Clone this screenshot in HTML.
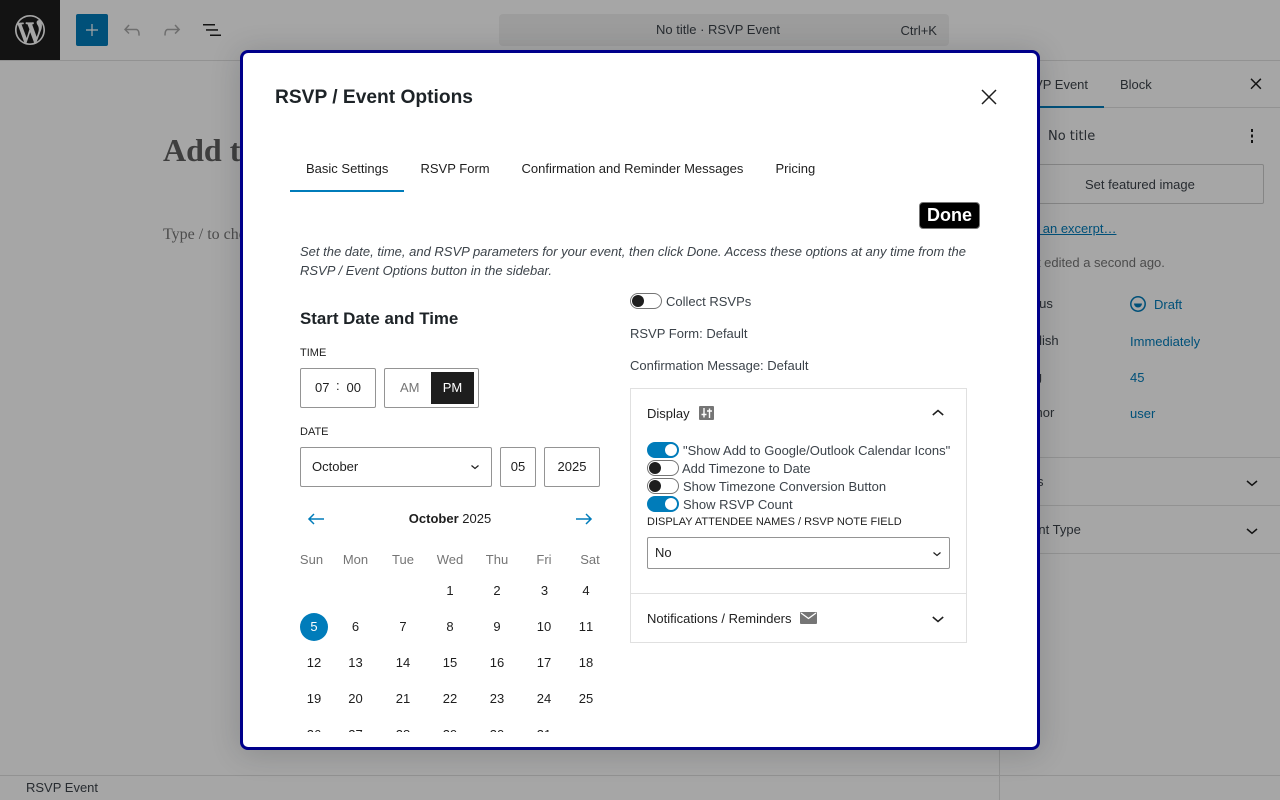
<!DOCTYPE html>
<html><head><meta charset="utf-8"><title>RSVP Event</title>
<style>
html,body{margin:0;padding:0;width:1280px;height:800px;overflow:hidden;background:#fff}
body{font:13px/18px "Liberation Sans",sans-serif;color:#3c434a;position:relative}
.a{position:absolute;white-space:nowrap}
.l{position:absolute;background:#e0e0e0}
.bx{position:absolute;box-sizing:border-box;border:1px solid #949494;border-radius:2px;background:#fff}
.blue{color:#007cba}
.dk{color:#1e1e1e}
.tg{position:absolute;box-sizing:border-box;width:32px;height:16px;border-radius:8px;border:1px solid #757575;background:#fff}
.tg:before{content:"";position:absolute;left:1px;top:1px;width:12px;height:12px;border-radius:50%;background:#1e1e1e}
.tg.on{background:#007cba;border-color:#007cba}
.tg.on:before{left:17px;background:#fff}
.d{position:absolute;width:40px;margin-left:-20px;text-align:center;line-height:18px;color:#1e1e1e;font-kerning:none}
.h{position:absolute;width:50px;margin-left:-25px;text-align:center;line-height:18px;color:#757575}
#ov{position:absolute;left:0;top:0;width:1280px;height:800px;background:rgba(0,0,0,.35)}
#m{position:absolute;left:240px;top:50px;width:800px;height:700px;box-sizing:border-box;border:3px solid #00008b;border-radius:8px;background:#fff;box-shadow:0 3px 30px rgba(25,30,35,.2);overflow:hidden}
#in{position:absolute;left:-243px;top:-53px;width:1280px;height:800px;will-change:transform}
#cal{position:absolute;left:0;top:0;width:1280px;height:732px;overflow:hidden}
</style></head><body>

<div class="l" style="left:0;top:60px;width:1280px;height:1px"></div>
<div class="a" style="left:0;top:0;width:60px;height:60px;background:#1e1e1e"></div>
<svg class="a" style="left:15px;top:15px" width="30" height="30" viewBox="0 0 20 20" fill="#fff"><path d="M20 10c0-5.51-4.49-10-10-10C4.48 0 0 4.49 0 10c0 5.52 4.48 10 10 10 5.51 0 10-4.48 10-10zM7.78 15.37L4.37 6.22c.55-.02 1.17-.08 1.17-.08.5-.06.44-1.13-.06-1.11 0 0-1.45.11-2.37.11-.18 0-.37 0-.58-.01C4.12 2.69 6.87 1.11 10 1.11c2.33 0 4.45.87 6.05 2.34-.68-.11-1.65.39-1.65 1.58 0 .74.45 1.36.9 2.1.35.61.55 1.36.55 2.46 0 1.49-1.4 5-1.4 5l-3.03-8.37c.54-.02.82-.17.82-.17.5-.05.44-1.25-.06-1.22 0 0-1.44.12-2.38.12-.87 0-2.33-.12-2.33-.12-.5-.03-.56 1.2-.06 1.22l.92.08 1.26 3.41zM17.41 10c.24-.64.74-1.87.43-4.25.7 1.29 1.05 2.71 1.05 4.25 0 3.29-1.73 6.24-4.4 7.78.97-2.59 1.94-5.2 2.92-7.78zM6.1 18.09C3.12 16.65 1.11 13.53 1.11 10c0-1.3.23-2.48.72-3.59C3.25 10.3 4.67 14.2 6.1 18.09zm4.03-6.63l2.58 6.98c-.86.29-1.76.45-2.71.45-.79 0-1.57-.11-2.29-.33.81-2.38 1.62-4.74 2.42-7.1z"/></svg>
<div class="a" style="left:76px;top:14px;width:32px;height:32px;background:#007cba;border-radius:2px"></div>
<svg class="a" style="left:80px;top:18px" width="24" height="24" viewBox="0 0 24 24" fill="#fff"><path d="M18 11.4h-5.400V6h-1.200v5.400H6v1.200h5.400V18h1.200v-5.400H18z"/></svg>
<svg class="a" style="left:120px;top:18px" width="24" height="24" viewBox="0 0 24 24" fill="#aaa"><path d="M18.3 11.7c-.6-.6-1.4-.9-2.3-.9H6.7l2.9-3.3-1.1-1-4.500 5L8.500 16l1-1-2.700-2.700H16c.5 0 .9.2 1.300.5 1 1 1 3.400 1 4.500v.3h1.500v-.2c0-1.500 0-4.300-1.500-5.700z"/></svg>
<svg class="a" style="left:160px;top:18px" width="24" height="24" viewBox="0 0 24 24" fill="#aaa"><path d="M15.600 6.500l-1.100 1 2.900 3.300H8c-.9 0-1.700.3-2.300.9-1.400 1.500-1.400 4.200-1.400 5.600v.2h1.500v-.3c0-1.100 0-3.500 1-4.500.3-.3.7-.5 1.300-.5h9.200L14.500 15l1.100 1.100 4.600-4.600-4.600-5z"/></svg>
<svg class="a" style="left:200px;top:18px" width="24" height="24" viewBox="0 0 24 24" fill="#1e1e1e"><rect x="3" y="6" width="12" height="1.500"/><rect x="6" y="11.200" width="12" height="1.500"/><rect x="10" y="16.500" width="11" height="1.500"/></svg>

<div class="a" style="left:499px;top:14px;width:450px;height:32px;background:#f0f0f0;border-radius:4px"></div>
<div class="a" style="left:656px;top:21px">No title · RSVP Event</div>
<div class="a" style="left:900.500px;top:22px">Ctrl+K</div>

<div class="a" style="left:163px;top:130px;font:bold 32px/40px 'Liberation Serif',serif;color:#606060">Add title</div>
<div class="a" style="left:163px;top:224px;font:16px/22px 'Liberation Serif',serif;color:#757575">Type / to choose a block</div>

<div class="l" style="left:999px;top:60px;width:1px;height:740px"></div>
<div class="l" style="left:1000px;top:107px;width:280px;height:1px"></div>
<div class="a" style="left:1000px;top:106px;width:104px;height:2px;background:#007cba"></div>
<div class="a" style="left:1016px;top:76px">RSVP Event</div>
<div class="a" style="left:1120px;top:76px">Block</div>
<svg class="a" style="left:1244px;top:72px" width="24" height="24" viewBox="0 0 24 24" fill="#1e1e1e"><path d="M13 11.800l4.400-4.400-1.100-1.100-4.400 4.400-4.400-4.400-1 1.100 4.400 4.400-4.400 4.400 1 1 4.400-4.400 4.400 4.400 1.100-1z"/></svg>
<div class="a" style="left:1048px;top:128px;font:13px/18px 'DejaVu Sans',sans-serif">No title</div>
<svg class="a" style="left:1240px;top:124px" width="24" height="24" viewBox="0 0 24 24" fill="#1e1e1e"><rect x="11" y="5" width="2" height="3"/><rect x="11" y="10.500" width="2" height="3"/><rect x="11" y="16" width="2" height="3"/></svg>
<div class="a" style="left:1016px;top:164px;width:248px;height:40px;box-sizing:border-box;border:1px solid #ccc;border-radius:2px"></div>
<div class="a" style="left:1085px;top:176px">Set featured image</div>
<div class="a blue" style="left:1016px;top:220px;text-decoration:underline">Add an excerpt…</div>
<div class="a" style="left:1016px;top:254px;color:#757575">Last edited a second ago.</div>
<div class="a" style="left:1016px;top:295px">Status</div>
<div class="a" style="left:1016px;top:332px">Publish</div>
<div class="a" style="left:1016px;top:368px">Slug</div>
<div class="a" style="left:1016px;top:404px">Author</div>
<svg class="a" style="left:1130px;top:296px" width="16" height="16" viewBox="0 0 16 16"><circle cx="8" cy="8" r="7.200" fill="none" stroke="#007cba" stroke-width="1.500"/><path d="M4 7.500h8a4 4 0 0 1-8 0z" fill="#007cba"/></svg>
<div class="a blue" style="left:1154px;top:296px">Draft</div>
<div class="a blue" style="left:1130px;top:333px">Immediately</div>
<div class="a blue" style="left:1130px;top:369px">45</div>
<div class="a blue" style="left:1130px;top:405px">user</div>
<div class="l" style="left:1000px;top:457px;width:280px;height:1px"></div>
<div class="a" style="left:1016px;top:473px">Tags</div>
<svg class="a" style="left:1240px;top:471px" width="24" height="24" viewBox="0 0 24 24" fill="none" stroke="#1e1e1e" stroke-width="1.500"><path d="M7 10l5 4.300 5-4.300"/></svg>
<div class="l" style="left:1000px;top:505px;width:280px;height:1px"></div>
<div class="a" style="left:1016px;top:521px">Event Type</div>
<svg class="a" style="left:1240px;top:519px" width="24" height="24" viewBox="0 0 24 24" fill="none" stroke="#1e1e1e" stroke-width="1.500"><path d="M7 10l5 4.300 5-4.300"/></svg>
<div class="l" style="left:1000px;top:553px;width:280px;height:1px"></div>

<div class="l" style="left:0;top:775px;width:1280px;height:1px"></div>
<div class="a" style="left:26px;top:779px">RSVP Event</div>

<div id="ov"></div>

<div id="m"><div id="in">
<div class="a" style="left:275px;top:86px;font:bold 19.200px/24px 'Liberation Sans',sans-serif;color:#1d2327">RSVP / Event Options</div>
<svg class="a" style="left:977px;top:85px" width="24" height="24" viewBox="0 0 24 24" fill="none" stroke="#1e1e1e" stroke-width="1.500"><path d="M5 5l14 14M19 5L5 19"/></svg>

<div class="a dk" style="left:306px;top:160px">Basic Settings</div>
<div class="a dk" style="left:420.500px;top:160px">RSVP Form</div>
<div class="a dk" style="left:521.500px;top:160px">Confirmation and Reminder Messages</div>
<div class="a dk" style="left:775.500px;top:160px">Pricing</div>
<div class="a" style="left:290px;top:190px;width:114px;height:2px;background:#007cba"></div>

<div class="a" style="left:919px;top:202px;width:61px;height:27px;box-sizing:border-box;background:#000;border:1px solid #777;border-radius:4px;color:#fff;font:bold 18px/25px 'Liberation Sans',sans-serif;text-align:center">Done</div>

<div class="a" style="left:300px;top:242px;font-style:italic;line-height:19px">Set the date, time, and RSVP parameters for your event, then click Done. Access these options at any time from the<br>RSVP / Event Options button in the sidebar.</div>

<div class="a" style="left:300px;top:308px;font:bold 16.900px/22px 'Liberation Sans',sans-serif;color:#1d2327">Start Date and Time</div>
<div class="a dk" style="left:300px;top:344px;font-size:11px">TIME</div>
<div class="bx" style="left:300px;top:368px;width:76px;height:40px"></div>
<div class="a dk" style="left:315px;top:379px">07</div>
<div class="a dk" style="left:336px;top:377px">:</div>
<div class="a dk" style="left:346.500px;top:379px">00</div>
<div class="bx" style="left:384px;top:368px;width:95px;height:40px"></div>
<div class="a" style="left:400px;top:379px;color:#757575">AM</div>
<div class="a" style="left:431px;top:372px;width:43px;height:32px;background:#1e1e1e;color:#fff;text-align:center;line-height:32px">PM</div>

<div class="a dk" style="left:300px;top:423px;font-size:11px">DATE</div>
<div class="bx dk" style="left:300px;top:447px;width:192px;height:40px"></div>
<div class="a dk" style="left:312px;top:458px">October</div>
<svg class="a" style="left:467px;top:459px" width="16" height="16" viewBox="0 0 16 16" fill="none" stroke="#1e1e1e" stroke-width="1.200"><path d="M4.500 6.500L8 9.500l3.500-3"/></svg>
<div class="bx dk" style="left:500px;top:447px;width:36px;height:40px;text-align:center;line-height:38px">05</div>
<div class="bx dk" style="left:544px;top:447px;width:56px;height:40px;text-align:center;line-height:38px">2025</div>

<svg class="a" style="left:304px;top:507px" width="24" height="24" viewBox="0 0 24 24" fill="#007cba"><path d="M20 11.200H6.800l3.700-3.700-1-1L3.900 12l5.600 5.500 1-1-3.700-3.700H20z"/></svg>
<svg class="a" style="left:572px;top:507px" width="24" height="24" viewBox="0 0 24 24" fill="#007cba"><path d="M14.500 6.500l-1 1 3.700 3.700H4v1.600h13.200l-3.700 3.700 1 1 5.600-5.500z"/></svg>
<div class="a dk" style="left:300px;top:510px;width:300px;text-align:center"><b>October</b> 2025</div>

<div id="cal">
<div class="h" style="left:311.500px;top:551px">Sun</div><div class="h" style="left:355.500px;top:551px">Mon</div><div class="h" style="left:403px;top:551px">Tue</div><div class="h" style="left:450px;top:551px">Wed</div><div class="h" style="left:497px;top:551px">Thu</div><div class="h" style="left:544px;top:551px">Fri</div><div class="h" style="left:590px;top:551px">Sat</div>

<div class="d" style="left:450px;top:582px">1</div><div class="d" style="left:497px;top:582px">2</div><div class="d" style="left:544.500px;top:582px">3</div><div class="d" style="left:586px;top:582px">4</div>

<div class="a" style="left:300px;top:613px;width:28px;height:28px;border-radius:50%;background:#007cba;color:#fff;text-align:center;line-height:28px">5</div>
<div class="d" style="left:355.500px;top:618px">6</div><div class="d" style="left:403px;top:618px">7</div><div class="d" style="left:450px;top:618px">8</div><div class="d" style="left:497px;top:618px">9</div><div class="d" style="left:544px;top:618px">10</div><div class="d" style="left:586px;top:618px">11</div>

<div class="d" style="left:314px;top:654px">12</div><div class="d" style="left:355.500px;top:654px">13</div><div class="d" style="left:403px;top:654px">14</div><div class="d" style="left:450px;top:654px">15</div><div class="d" style="left:497px;top:654px">16</div><div class="d" style="left:544px;top:654px">17</div><div class="d" style="left:586px;top:654px">18</div>

<div class="d" style="left:314px;top:690px">19</div><div class="d" style="left:355.500px;top:690px">20</div><div class="d" style="left:403px;top:690px">21</div><div class="d" style="left:450px;top:690px">22</div><div class="d" style="left:497px;top:690px">23</div><div class="d" style="left:544px;top:690px">24</div><div class="d" style="left:586px;top:690px">25</div>

<div class="d" style="left:314px;top:726px">26</div><div class="d" style="left:355.500px;top:726px">27</div><div class="d" style="left:403px;top:726px">28</div><div class="d" style="left:450px;top:726px">29</div><div class="d" style="left:497px;top:726px">30</div><div class="d" style="left:544px;top:726px">31</div>
</div>

<div class="tg" style="left:630px;top:293px"></div>
<div class="a" style="left:666px;top:293px">Collect RSVPs</div>
<div class="a" style="left:630px;top:325px">RSVP Form: Default</div>
<div class="a" style="left:630px;top:357px">Confirmation Message: Default</div>

<div class="a" style="left:630px;top:388px;width:337px;height:255px;box-sizing:border-box;border:1px solid #e0e0e0"></div>
<div class="l" style="left:631px;top:593px;width:335px;height:1px"></div>
<div class="a dk" style="left:647px;top:405px">Display</div>
<svg class="a" style="left:699px;top:406px" width="15" height="14" viewBox="0 0 15 14"><rect width="15" height="14" rx="1" fill="#757575"/><path d="M5 2v9.500M2.500 8.500h5M10.500 12V2.500M8 5h5" fill="none" stroke="#fff" stroke-width="1.400"/></svg>
<svg class="a" style="left:926px;top:401px" width="24" height="24" viewBox="0 0 24 24" fill="none" stroke="#1e1e1e" stroke-width="1.500"><path d="M6.800 14l5.200-4.500 5.200 4.500"/></svg>

<div class="tg on" style="left:647px;top:442px"></div>
<div class="a" style="left:683px;top:442px">"Show Add to Google/Outlook Calendar Icons"</div>
<div class="tg" style="left:647px;top:460px"></div>
<div class="a" style="left:682px;top:460px">Add Timezone to Date</div>
<div class="tg" style="left:647px;top:478px"></div>
<div class="a" style="left:683px;top:478px">Show Timezone Conversion Button</div>
<div class="tg on" style="left:647px;top:496px"></div>
<div class="a" style="left:683px;top:496px">Show RSVP Count</div>
<div class="a dk" style="left:647px;top:513px;font-size:11px">DISPLAY ATTENDEE NAMES / RSVP NOTE FIELD</div>
<div class="bx" style="left:647px;top:537px;width:303px;height:32px"></div>
<div class="a dk" style="left:655px;top:544px">No</div>
<svg class="a" style="left:929px;top:546px" width="16" height="16" viewBox="0 0 16 16" fill="none" stroke="#1e1e1e" stroke-width="1.200"><path d="M4.500 6.500L8 9.500l3.500-3"/></svg>

<div class="a dk" style="left:647px;top:610px">Notifications / Reminders</div>
<svg class="a" style="left:800px;top:611px" width="18" height="14" viewBox="0 0 18 14"><rect x="0" y="1" width="17" height="12" rx="1" fill="#757575"/><path d="M1 2l7.500 5.500L16 2" fill="none" stroke="#fff" stroke-width="1.300"/></svg>
<svg class="a" style="left:926px;top:607px" width="24" height="24" viewBox="0 0 24 24" fill="none" stroke="#1e1e1e" stroke-width="1.500"><path d="M6.800 10l5.200 4.500 5.200-4.500"/></svg>
</div></div>
</body></html>
